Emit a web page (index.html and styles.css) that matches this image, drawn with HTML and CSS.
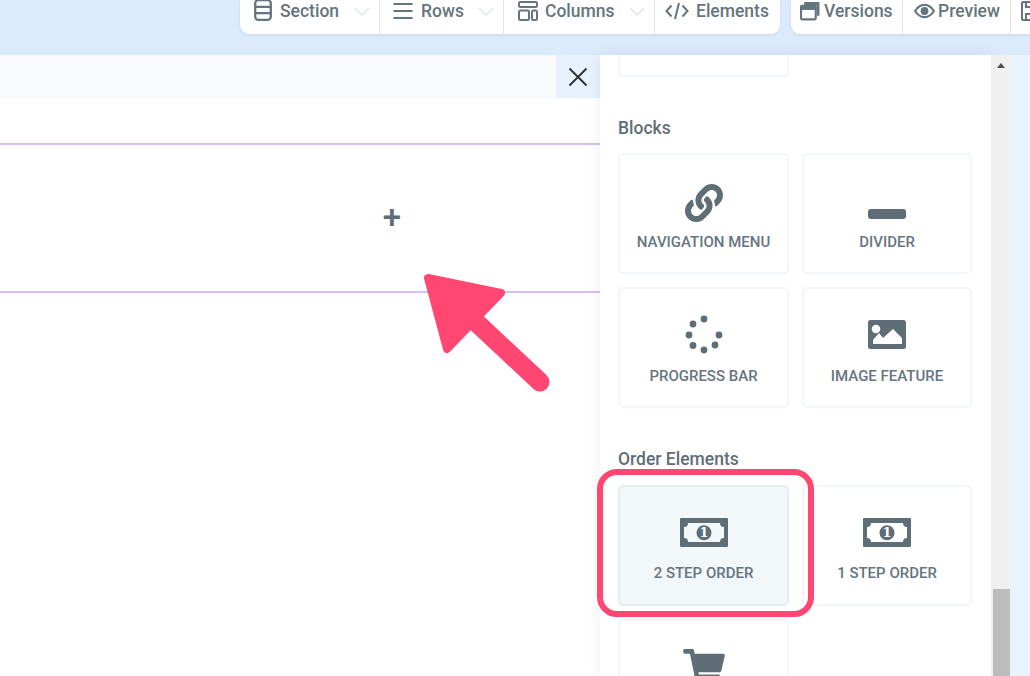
FILE: index.html
```html
<!DOCTYPE html>
<html lang="en">
<head>
<meta charset="utf-8">
<title>Page builder</title>
<link rel="stylesheet" href="styles.css">
</head>
<body>
<header class="topbar">
  <nav class="group">
    <div class="seg seg-section">
      <svg class="ticon" viewBox="0 0 18 22"><rect x="1.2" y="1.2" width="15.6" height="19.6" rx="3"/><path d="M1 7.8h16M1 14.2h16"/></svg>
      <span>Section</span>
      <svg class="chev" viewBox="0 0 16 9"><path d="M1 1l7 7 7-7"/></svg>
    </div>
    <div class="seg seg-rows">
      <svg class="ticon" viewBox="0 0 20 18"><path d="M0.5 2h19M0.5 9h19M0.5 16h19"/></svg>
      <span>Rows</span>
      <svg class="chev" viewBox="0 0 16 9"><path d="M1 1l7 7 7-7"/></svg>
    </div>
    <div class="seg seg-columns">
      <svg class="ticon" viewBox="0 0 20 20"><rect x="1" y="1" width="18" height="5" rx="1.5"/><rect x="1" y="9.500" width="10" height="9.500" rx="1.500"/><rect x="14" y="9.500" width="5" height="9.500" rx="1.500"/></svg>
      <span>Columns</span>
      <svg class="chev" viewBox="0 0 16 9"><path d="M1 1l7 7 7-7"/></svg>
    </div>
    <div class="seg seg-elements">
      <svg class="ticon code" viewBox="0 0 24 18"><path d="M6.500 3.500L1.500 9l5 5.500M17.500 3.500l5 5.500-5 5.500M14 1l-4 16"/></svg>
      <span>Elements</span>
    </div>
  </nav>
  <nav class="group">
    <div class="seg seg-versions">
      <svg class="ticon" viewBox="0 0 19 18"><path class="solid" d="M4 0.500h14.500v13h-2.500v-10h-12z"/><rect x="1" y="4" width="14" height="13" rx="1"/><path class="solid" d="M0.500 4h15v4h-15z"/></svg>
      <span>Versions</span>
    </div>
    <div class="seg seg-preview">
      <svg class="ticon" viewBox="0 0 20 14"><path d="M1 7c2.300-3.800 5.300-5.800 9-5.800s6.700 2 9 5.800c-2.300 3.800-5.300 5.800-9 5.800S3.300 10.800 1 7z"/><circle class="solid" cx="10" cy="7" r="3.700"/></svg>
      <span>Preview</span>
    </div>
    <div class="seg seg-save">
      <svg class="ticon" viewBox="0 0 18 20"><path d="M1 2a1 1 0 0 1 1-1h11l4 4v13a1 1 0 0 1-1 1H2a1 1 0 0 1-1-1z"/><path d="M5 1v5h7V1M5 19v-6h8v6"/></svg>
    </div>
  </nav>
</header>

<main class="main">
  <section class="canvas">
    <div class="canvas-head">
      <button class="close" type="button" aria-label="Close">
        <svg viewBox="0 0 20 20"><path d="M1.500 1.500l17 17M18.500 1.500l-17 17"/></svg>
      </button>
    </div>
    <div class="dropzone"><span class="plus">+</span></div>
  </section>

  <aside class="panel">
    <div class="card card-stub"></div>

    <h2 class="panel-title">Blocks</h2>
    <div class="cards">
      <div class="card">
        <svg class="icon icon-link" viewBox="0 0 512 512"><path d="M326.612 185.391c59.747 59.809 58.927 155.698.36 214.59-.11.12-.24.25-.36.37l-67.2 67.2c-59.27 59.27-155.699 59.262-214.96 0-59.27-59.26-59.27-155.7 0-214.96l37.106-37.106c9.84-9.84 26.786-3.3 27.294 10.606.648 17.722 3.826 35.527 9.69 52.721 1.986 5.822.567 12.262-3.783 16.612l-13.087 13.087c-28.026 28.026-28.905 73.66-1.155 101.96 28.024 28.579 74.086 28.749 102.325.51l67.2-67.19c28.191-28.191 28.073-73.757 0-101.83-3.701-3.694-7.429-6.564-10.341-8.569a16.037 16.037 0 0 1-6.947-12.606c-.396-10.567 3.348-21.456 11.698-29.806l21.054-21.055c5.521-5.521 14.182-6.199 20.584-1.731a152.482 152.482 0 0 1 20.522 17.197zM467.547 44.449c-59.261-59.262-155.69-59.27-214.96 0l-67.2 67.2c-.12.12-.25.25-.36.37-58.566 58.892-59.387 154.781.36 214.59a152.454 152.454 0 0 0 20.521 17.196c6.402 4.468 15.064 3.789 20.584-1.731l21.054-21.055c8.35-8.35 12.094-19.239 11.698-29.806a16.037 16.037 0 0 0-6.947-12.606c-2.912-2.005-6.64-4.875-10.341-8.569-28.073-28.073-28.191-73.639 0-101.83l67.2-67.19c28.239-28.239 74.3-28.069 102.325.51 27.75 28.3 26.872 73.934-1.155 101.96l-13.087 13.087c-4.35 4.35-5.769 10.79-3.783 16.612 5.864 17.194 9.042 34.999 9.69 52.721.509 13.906 17.454 20.446 27.294 10.606l37.106-37.106c59.271-59.259 59.271-155.699.001-214.959z"/></svg>
        <span class="label">NAVIGATION MENU</span>
      </div>
      <div class="card">
        <svg class="icon" viewBox="0 0 38 38"><rect x="0" y="26" width="38" height="10" rx="3"/></svg>
        <span class="label">DIVIDER</span>
      </div>
      <div class="card">
        <svg class="icon" viewBox="0 0 38 38"><circle cx="19" cy="2" r="3.400"/><circle cx="8" cy="7" r="3.400"/><circle cx="4" cy="18" r="3.400"/><circle cx="8" cy="28.500" r="3.400"/><circle cx="19" cy="33" r="3.400"/><circle cx="30" cy="28" r="3.400"/><circle cx="34" cy="18" r="3.400"/></svg>
        <span class="label">PROGRESS BAR</span>
      </div>
      <div class="card">
        <svg class="icon" viewBox="0 0 38 38"><path fill-rule="evenodd" d="M2.500 3h33A2.500 2.500 0 0 1 38 5.500v24a2.500 2.500 0 0 1-2.500 2.500h-33A2.500 2.500 0 0 1 0 29.500v-24A2.500 2.500 0 0 1 2.500 3zM3.700 12a4.300 4.300 0 1 0 8.600 0 4.300 4.300 0 0 0-8.600 0zM5 27h29v-6l-9-9-10 9-4-5-6 7z"/></svg>
        <span class="label">IMAGE FEATURE</span>
      </div>
    </div>

    <h2 class="panel-title panel-title-order">Order Elements</h2>
    <div class="cards">
      <div class="card card-active">
        <svg class="icon icon-bill" viewBox="0 0 48 29"><path fill-rule="evenodd" d="M1 0h46a1 1 0 0 1 1 1v27a1 1 0 0 1-1 1H1a1 1 0 0 1-1-1V1a1 1 0 0 1 1-1zM8 5a4 4 0 0 1-4 4v11a4 4 0 0 1 4 4h32a4 4 0 0 1 4-4V9a4 4 0 0 1-4-4z"/><circle cx="24" cy="14.700" r="7.500"/><text class="bill-one" x="24" y="19.200">1</text></svg>
        <span class="label">2 STEP ORDER</span>
      </div>
      <div class="card">
        <svg class="icon icon-bill" viewBox="0 0 48 29"><path fill-rule="evenodd" d="M1 0h46a1 1 0 0 1 1 1v27a1 1 0 0 1-1 1H1a1 1 0 0 1-1-1V1a1 1 0 0 1 1-1zM8 5a4 4 0 0 1-4 4v11a4 4 0 0 1 4 4h32a4 4 0 0 1 4-4V9a4 4 0 0 1-4-4z"/><circle cx="24" cy="14.700" r="7.500"/><text class="bill-one" x="24" y="19.200">1</text></svg>
        <span class="label">1 STEP ORDER</span>
      </div>
      <div class="card">
        <svg class="icon icon-cart" viewBox="0 0 576 512"><path d="M528.12 301.319l47.273-208C578.806 78.301 567.391 64 551.99 64H159.208l-9.166-44.81C147.758 8.021 137.93 0 126.529 0H24C10.745 0 0 10.745 0 24v16c0 13.255 10.745 24 24 24h69.883l70.248 343.435C147.325 417.1 136 435.222 136 456c0 30.928 25.072 56 56 56s56-25.072 56-56c0-15.674-6.447-29.835-16.824-40h209.647C430.447 426.165 424 440.326 424 456c0 30.928 25.072 56 56 56s56-25.072 56-56c0-22.172-12.888-41.332-31.579-50.405l5.517-24.276c3.413-15.018-8.002-29.319-23.403-29.319H218.117l-6.545-32h293.145c11.206 0 20.92-7.754 23.403-18.681z"/></svg>
      </div>
    </div>
  </aside>

  <div class="scrollbar">
    <span class="scroll-up"></span>
    <span class="scroll-thumb"></span>
  </div>
  <div class="gutter"></div>
</main>

<div class="ring"></div>
<svg class="arrow" viewBox="0 0 1030 676"><path class="arrow-head" d="M428 278L501 293L447 349z"/><path class="arrow-shaft" d="M478 324L540 382"/></svg>
</body>
</html>
```

FILE: styles.css
```css
* { box-sizing: border-box; }
html, body { margin: 0; height: 676px; overflow: hidden; }
body { position: relative; background: #fff; font-family: Roboto, "Liberation Sans", sans-serif; color: #5f6e76; }

.topbar { display: flex; gap: 11px; height: 55px; padding-left: 240px; background: #dbebfc; overflow: hidden; }
.group { display: flex; flex: none; height: 34px; background: #fff; border-radius: 0 0 9px 9px; box-shadow: 0 1px 3px rgba(120,140,160,.18); }
.seg { display: flex; align-items: center; flex: none; height: 34px; padding-bottom: 12px; font-size: 17.5px; font-weight: 500; color: #65757e; border-right: 1px solid #e1e4e7; white-space: nowrap; }
.seg:last-child { border-right: 0; }
.seg-section { width: 140px; padding-left: 14px; }
.seg-rows { width: 124px; padding-left: 13px; }
.seg-columns { width: 151px; padding-left: 14px; }
.seg-elements { width: 125px; padding-left: 10px; }
.seg-versions { width: 112px; padding-left: 9px; }
.seg-preview { width: 108px; padding-left: 11px; }
.seg-save { width: 60px; padding-left: 10px; }

.ticon { flex: none; width: 18px; height: 22px; margin-right: 8px; fill: none; stroke: #65757e; stroke-width: 2; }
.seg-section .ticon { margin-top: -2px; stroke-width: 2.300; }
.seg-rows .ticon { width: 20px; }
.seg-columns .ticon { width: 20px; margin-right: 7px; }
.seg-elements .ticon { width: 24px; margin-right: 7px; }
.seg-versions .ticon { width: 20px; margin-right: 4px; }
.seg-preview .ticon { width: 21px; margin-right: 3px; }
.seg-save .ticon { width: 18px; }
.solid { fill: #65757e; stroke: none; }
.chev { flex: none; width: 16px; height: 9px; margin-left: auto; margin-right: 9px; fill: none; stroke: #e0e5e9; stroke-width: 1.500; }

.main { display: flex; height: 621px; }
.canvas { flex: none; width: 600px; }
.canvas-head { display: flex; justify-content: flex-end; height: 44px; background: #f8fafc; }
.close { display: flex; align-items: center; justify-content: center; width: 44px; height: 43px; padding: 0; border: 0; background: #e7f2fd; }
.close svg { width: 20px; height: 20px; fill: none; stroke: #2b2f33; stroke-width: 1.800; }
.dropzone { display: flex; align-items: center; justify-content: center; height: 150px; margin-top: 44px; border-top: 2px solid #d6bef7; border-bottom: 2px solid #d6bef7; }
.plus { margin-left: 184px; margin-top: -1px; font-size: 33px; font-weight: 500; line-height: 1; color: #5f6e76; }

.panel { flex: none; width: 391px; height: 621px; padding: 0 19px 0 18px; overflow: hidden; background: #fff; box-shadow: 0 0 14px rgba(0,0,0,.07); position: relative; }
.panel-title { margin: 40px 0 14px; font-size: 17.500px; font-weight: 500; line-height: 22px; color: #5f6e76; }
.panel-title-order { margin: 40px 0 15px; }
.cards { display: grid; grid-template-columns: 171px 170px; column-gap: 13px; row-gap: 13px; grid-auto-rows: 121px; }
.card { display: flex; flex-direction: column; align-items: center; padding-top: 28px; background: #fff; border: 2px solid #f2f6fa; border-radius: 5px; }
.card-stub { width: 171px; height: 22px; padding: 0; border-top: 0; border-radius: 0 0 5px 5px; }
.card-active { background: #f2f7fa; border-color: #e3edf4; }
.icon { display: block; flex: none; width: 38px; height: 38px; fill: #5f6e76; overflow: visible; }
.icon-link { position: relative; top: 1px; }
.icon-bill { width: 48px; height: 29px; margin: 3px 0 5px; }
.icon-cart { width: 42px; height: 37px; }
.bill-one { font-family: "DejaVu Serif", serif; font-size: 13px; font-weight: 700; fill: #fff; text-anchor: middle; }
.label { margin-top: 12px; font-size: 15px; font-weight: 500; line-height: 18px; color: #66757f; white-space: nowrap; }

.scrollbar { display: flex; flex-direction: column; justify-content: space-between; align-items: center; flex: none; width: 20px; height: 621px; background: #f0f0f0; position: relative; }
.scroll-up { width: 0; height: 0; margin-top: 8px; border: 4.500px solid transparent; border-top: 0; border-bottom: 5px solid #505050; }
.scroll-thumb { width: 17px; height: 87px; background: #bdbdbd; }
.gutter { flex: 1; background: #e8f3fe; }

.ring { position: absolute; left: 597px; top: 469px; width: 217px; height: 148px; border: 6px solid #ff4772; border-radius: 20px; }
.arrow { position: absolute; left: 0; top: 0; width: 1030px; height: 676px; pointer-events: none; }
.arrow-head { fill: #ff4772; stroke: #ff4772; stroke-width: 8; stroke-linejoin: round; }
.arrow-shaft { fill: none; stroke: #ff4772; stroke-width: 19; stroke-linecap: round; }
```
